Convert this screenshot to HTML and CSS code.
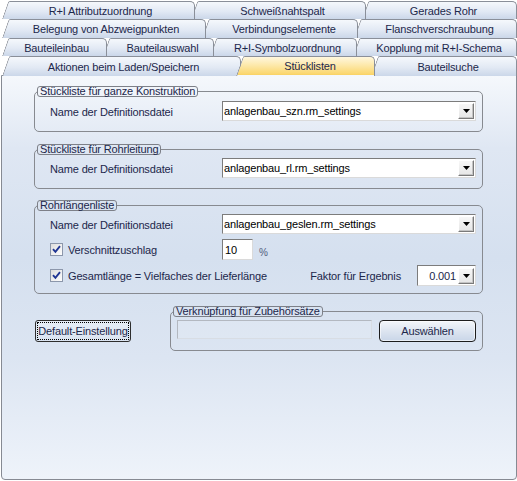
FILE: index.html
```html
<!DOCTYPE html>
<html>
<head>
<meta charset="utf-8">
<title>Stücklisten</title>
<link rel="stylesheet" href="styles.css">
</head>
<body>
<div class="tabs">
  <div class="row r1">
    <div class="tab first"><span>R+I Attributzuordnung</span></div>
    <div class="tab"><span>Schweißnahtspalt</span></div>
    <div class="tab"><span>Gerades Rohr</span></div>
  </div>
  <div class="row r2">
    <div class="tab first"><span>Belegung von Abzweigpunkten</span></div>
    <div class="tab"><span>Verbindungselemente</span></div>
    <div class="tab"><span>Flanschverschraubung</span></div>
  </div>
  <div class="row r3">
    <div class="tab first"><span>Bauteileinbau</span></div>
    <div class="tab"><span>Bauteilauswahl</span></div>
    <div class="tab"><span>R+I-Symbolzuordnung</span></div>
    <div class="tab"><span>Kopplung mit R+I-Schema</span></div>
  </div>
  <div class="row r4">
    <div class="tab first"><span>Aktionen beim Laden/Speichern</span></div>
    <div class="tab sel"><span>Stücklisten</span></div>
    <div class="tab"><span>Bauteilsuche</span></div>
  </div>
</div>

<div class="panel">
  <fieldset class="grp g1">
    <legend>Stückliste für ganze Konstruktion</legend>
    <div class="gc">
      <div class="line">
        <span class="lbl">Name der Definitionsdatei</span>
        <div class="combo wide"><span class="val">anlagenbau_szn.rm_settings</span><span class="drop"><svg width="7" height="4" viewBox="0 0 7 4"><path d="M0 0h7L3.5 4z" fill="#000"/></svg></span></div>
      </div>
    </div>
  </fieldset>

  <fieldset class="grp g2">
    <legend>Stückliste für Rohrleitung</legend>
    <div class="gc">
      <div class="line">
        <span class="lbl">Name der Definitionsdatei</span>
        <div class="combo wide"><span class="val">anlagenbau_rl.rm_settings</span><span class="drop"><svg width="7" height="4" viewBox="0 0 7 4"><path d="M0 0h7L3.5 4z" fill="#000"/></svg></span></div>
      </div>
    </div>
  </fieldset>

  <fieldset class="grp g3">
    <legend>Rohrlängenliste</legend>
    <div class="gc stack">
      <div class="line">
        <span class="lbl">Name der Definitionsdatei</span>
        <div class="combo wide"><span class="val">anlagenbau_geslen.rm_settings</span><span class="drop"><svg width="7" height="4" viewBox="0 0 7 4"><path d="M0 0h7L3.5 4z" fill="#000"/></svg></span></div>
      </div>
      <div class="line tall">
        <label class="chk"><svg width="13" height="13" viewBox="0 0 13 13"><defs><linearGradient id="cb" x1="0" y1="0" x2="1" y2="1"><stop offset="0" stop-color="#dcdcdc"/><stop offset="1" stop-color="#ffffff"/></linearGradient></defs><rect x="0.5" y="0.5" width="12" height="12" fill="url(#cb)" stroke="#8c97ab"/><path d="M3 6.2l2.4 2.6 4.6-5.6" fill="none" stroke="#1f3593" stroke-width="1.9"/></svg><span>Verschnittzuschlag</span></label>
        <div class="pct"><span class="num">10</span><span class="unit">%</span></div>
      </div>
      <div class="line3">
        <label class="chk"><svg width="13" height="13" viewBox="0 0 13 13"><rect x="0.5" y="0.5" width="12" height="12" fill="url(#cb)" stroke="#8c97ab"/><path d="M3 6.2l2.4 2.6 4.6-5.6" fill="none" stroke="#1f3593" stroke-width="1.9"/></svg><span>Gesamtlänge = Vielfaches der Lieferlänge</span></label>
        <span class="faktor">Faktor für Ergebnis</span>
        <div class="combo small"><span class="val right">0.001</span><span class="drop"><svg width="7" height="4" viewBox="0 0 7 4"><path d="M0 0h7L3.5 4z" fill="#000"/></svg></span></div>
      </div>
    </div>
  </fieldset>

  <div class="bottom">
    <div class="btn defbtn"><span class="focus">Default-Einstellung</span></div>
    <fieldset class="grp g4">
      <legend>Verknüpfung für Zubehörsätze</legend>
      <div class="gc row4">
        <div class="txt"></div>
        <div class="btn sel-btn">Auswählen</div>
      </div>
    </fieldset>
  </div>
</div>
</body>
</html>
```

FILE: styles.css
```css
* { box-sizing: border-box; }
html, body { margin: 0; padding: 0; }
body {
  width: 517px;
  height: 481px;
  overflow: hidden;
  background: #ffffff;
  font-family: "Liberation Sans", Arial, sans-serif;
  font-size: 11px;
  letter-spacing: -0.15px;
  color: #1c274b;
}

/* ---------- tabs ---------- */
.tabs { padding-top: 1px; }
.row { display: grid; padding-left: 2px; height: 18px; }
.r2, .r4 { height: 19px; }
.r1 { grid-template-columns: 193px 171px 151px; }
.r2 { grid-template-columns: 204px 152px 159px; }
.r3 { grid-template-columns: 105px 107px 143px 160px; }
.r4 { grid-template-columns: 239px 134px 142px; }

.tab {
  --bg: linear-gradient(#f5f8fc, #e2e9f4 55%, #cbd7e9);
  position: relative;
  display: flex;
  align-items: center;
  justify-content: center;
  white-space: nowrap;
  color: #1c274b;
}
.tab:nth-child(1) { z-index: 5; }
.tab:nth-child(2) { z-index: 4; }
.tab:nth-child(3) { z-index: 3; }
.tab:nth-child(4) { z-index: 2; }
.tab::before {
  content: "";
  position: absolute;
  top: 0;
  bottom: 0;
  left: -4.5px;
  width: 22px;
  background: var(--bg);
  border-left: 1px solid #8a8f99;
  border-top: 1px solid #8a8f99;
  border-top-left-radius: 2px;
  transform: skewX(-19.4deg);
  transform-origin: 0 100%;
}
.tab.first::before { left: 0; }
.tab::after {
  content: "";
  position: absolute;
  top: 0;
  bottom: 0;
  left: 10px;
  right: 0;
  background: var(--bg);
  border-top: 1px solid #8a8f99;
  border-right: 1px solid #8a8f99;
  border-top-right-radius: 5px;
}
.tab span { position: relative; z-index: 1; padding-left: 4px; padding-top: 1px; }
.tab.sel {
  --bg: linear-gradient(#f4f7fc, #f4f7fc) bottom / 100% 1px no-repeat,
        linear-gradient(#fff7de, #fde8a8 45%, #fbd770 88%, #f8cc58);
  z-index: 9;
  height: 20px;
  align-self: start;
}
.tab.sel::before { left: -5px; }
.tab.sel span { padding-bottom: 1px; }

/* ---------- panel ---------- */
.panel {
  margin-left: 1px;
  width: 516px;
  height: 405px;
  border: 1px solid #868a93;
  border-radius: 0 0 4px 4px;
  background: linear-gradient(#f5f8fc 0%, #dfe7f3 18%, #d5e0ef 45%, #dce5f2 70%, #eef3fa 100%);
  padding: 10px 0 0 32px;
}

.grp {
  margin: 0;
  padding: 0;
  min-width: 0;
  width: 449px;
  border: 1px solid #878a90;
  border-radius: 5px;
}
.grp legend {
  margin-left: 2px;
  padding: 0 2px;
  height: 11px;
  line-height: 9px;
  border: 1px solid #7d8088;
  border-radius: 3px;
  color: #1c274b;
  white-space: nowrap;
}
.g2 { margin-top: 12px; }
.g3 { margin-top: 11px; }

.gc { padding: 4px 6px 10px 15px; }
.g2 .gc { padding-top: 3px; }
.g3 .gc { padding: 3px 6px 7px 15px; }
.stack { display: flex; flex-direction: column; gap: 5px; }

.line {
  display: grid;
  grid-template-columns: 172px 254px;
  align-items: center;
}
.line.tall { height: 21px; }
.line3 { display: flex; align-items: center; height: 21px; }

.lbl { padding-top: 1px; }

.combo {
  display: flex;
  align-items: center;
  height: 20px;
  background: #ffffff;
  border: 1px solid;
  border-color: #7c7c7c #dadada #dadada #7c7c7c;
  color: #000;
}
.combo.wide { width: 254px; }
.combo.small { width: 59px; height: 21px; margin-left: 16px; }
.val { flex: 1; padding-left: 1px; white-space: nowrap; overflow: hidden; }
.val.right { text-align: right; padding-right: 2px; color: #1c274b; }
.drop {
  flex: none;
  width: 16px;
  height: 16px;
  margin-right: 1px;
  display: flex;
  align-items: center;
  justify-content: center;
  background: linear-gradient(#f7f7f7, #e6e6e6);
  border: 1px solid;
  border-color: #ffffff #7a7a7a #7a7a7a #ffffff;
  box-shadow: inset -1px -1px 0 #c4c4c4;
}
.drop svg { display: block; }

.chk { display: flex; align-items: center; gap: 5px; white-space: nowrap; }
.chk svg { display: block; flex: none; }

.pct { display: flex; align-items: flex-end; height: 21px; }
.num {
  display: flex;
  align-items: center;
  width: 31px;
  height: 21px;
  padding-left: 2px;
  background: #fff;
  border: 1px solid;
  border-color: #7c7c7c #dadada #dadada #7c7c7c;
  color: #000;
}
.unit { margin-left: 6px; font-size: 10px; color: #4f5c7d; padding-bottom: 2px; }

.faktor { margin-left: auto; white-space: nowrap; }

/* ---------- bottom ---------- */
.bottom { display: flex; align-items: flex-start; margin-top: 12px; }
.btn {
  display: flex;
  align-items: center;
  justify-content: center;
  height: 22px;
  white-space: nowrap;
  color: #1c274b;
}
.defbtn {
  margin: 14px 0 0 1px;
  width: 96px;
  border: 1px solid #2e2e2e;
  border-radius: 3px;
  background: linear-gradient(#e6edf6, #dae3f0);
  padding: 1px;
}
.focus {
  flex: 1;
  align-self: stretch;
  display: flex;
  align-items: center;
  justify-content: center;
  border: 1px dotted #000;
}
.g4 { width: 313px; margin-left: 39px; }
.g4 .gc { display: flex; align-items: flex-start; gap: 7px; padding: 3px 6px 8px 6px; }
.txt {
  width: 195px;
  height: 19px;
  border: 1px solid;
  border-color: #b3b8c0 #d8dde4 #d8dde4 #b3b8c0;
  background: rgba(255, 255, 255, 0.12);
}
.sel-btn {
  width: 97px;
  border: 1px solid #1d1d1d;
  border-radius: 4px;
  background: linear-gradient(#f3f6fa, #dde5f0 50%, #c9d6e8);
  box-shadow: inset 0 0 0 1px rgba(255, 255, 255, 0.6);
}
```
